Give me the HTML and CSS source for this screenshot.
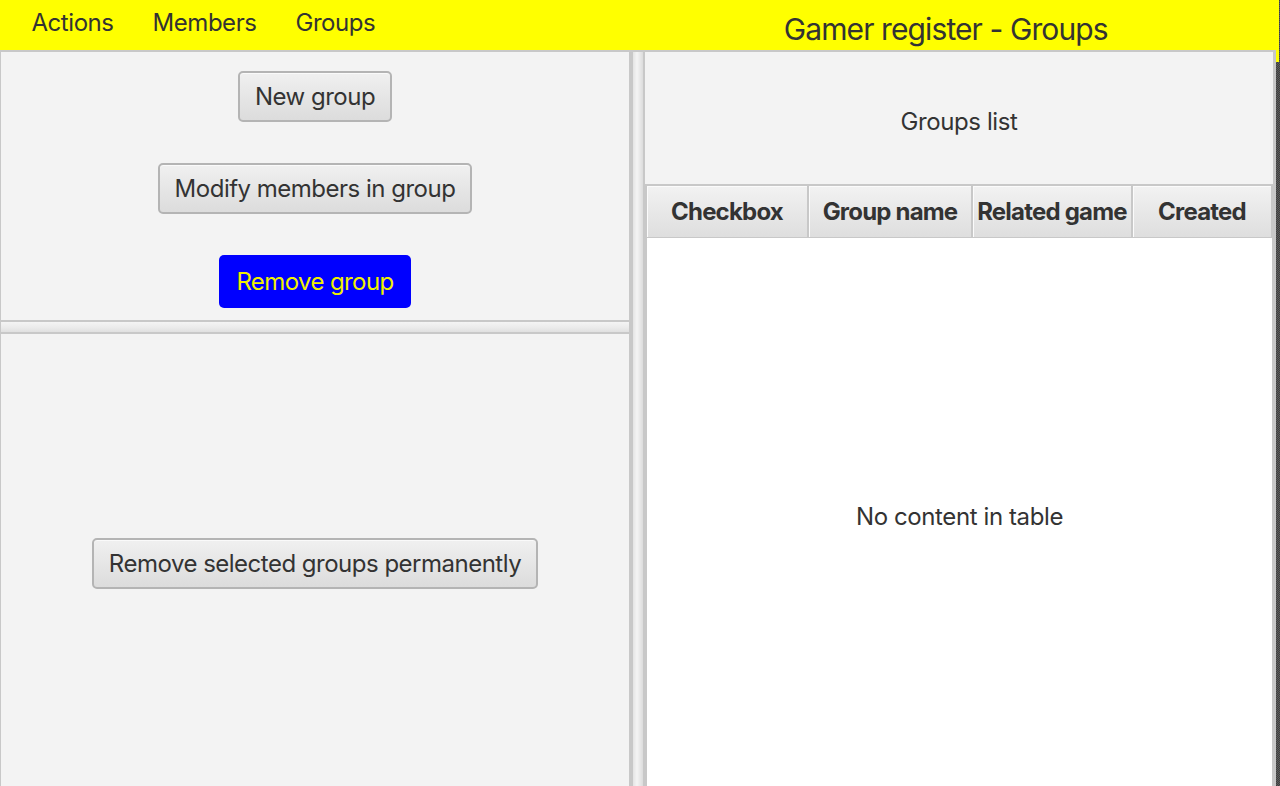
FILE: index.html
```html
<!DOCTYPE html>
<html lang="en">
<head>
<meta charset="utf-8">
<title>Gamer register - Groups</title>
<link rel="stylesheet" href="styles.css">
</head>
<body>
<div class="app">
  <header class="menubar">
    <nav class="menu">
      <span class="menu-item">Actions</span>
      <span class="menu-item">Members</span>
      <span class="menu-item">Groups</span>
    </nav>
    <h1 class="title">Gamer register - Groups</h1>
  </header>
  <div class="main">
    <section class="left-pane">
      <div class="actions">
        <button class="btn">New group</button>
        <button class="btn">Modify members in group</button>
        <button class="btn btn-blue">Remove group</button>
      </div>
      <div class="hdivider"></div>
      <div class="danger">
        <button class="btn">Remove selected groups permanently</button>
      </div>
    </section>
    <div class="vdivider"></div>
    <section class="right-pane">
      <div class="list-title">Groups list</div>
      <div class="table">
        <div class="thead">
          <div class="th col-1">Checkbox</div>
          <div class="th col-2">Group name</div>
          <div class="th col-3">Related game</div>
          <div class="th col-4">Created</div>
          <div class="th-filler"></div>
        </div>
        <div class="tbody">No content in table</div>
      </div>
    </section>
  </div>
</div>
</body>
</html>
```

FILE: styles.css
```css
* { box-sizing: border-box; }

html, body {
  margin: 0;
  padding: 0;
}

body {
  width: 1280px;
  height: 786px;
  overflow: hidden;
  font-family: Inter, "Noto Sans", sans-serif;
  color: #333333;
  background-color: #4a4a4a;
  background-image: repeating-conic-gradient(#3e3e3e 0 25%, #5c5c5c 0 50%);
  background-size: 2px 2px;
}

.app {
  position: relative;
  width: 1280px;
  height: 786px;
}

.menubar {
  position: relative;
  height: 50px;
  width: 1279px;
  background: #ffff00;
  display: flex;
  align-items: flex-start;
}

.menubar::after {
  content: "";
  position: absolute;
  right: 0;
  top: 50px;
  width: 3px;
  height: 12px;
  background: #ffff00;
}

.menu {
  display: flex;
  padding-left: 12px;
  height: 45px;
  align-items: center;
}

.menu-item {
  font-size: 24px;
  padding: 0 19.5px;
  line-height: 30px;
  letter-spacing: -0.45px;
}

.title {
  margin: 0 0 0 389px;
  font-size: 30px;
  font-weight: 400;
  line-height: 36px;
  padding-top: 11px;
  letter-spacing: -0.9px;
}

.main {
  display: flex;
  width: 1276px;
  height: 736px;
  border-top: 2px solid #c8c8c8;
  background: #f3f3f3;
}

.left-pane {
  width: 629px;
  border-left: 1px solid #c8c8c8;
  display: flex;
  flex-direction: column;
}

.actions {
  height: 268px;
  flex-shrink: 0;
  display: flex;
  flex-direction: column;
  align-items: center;
  padding-top: 19px;
  gap: 41px;
}

.btn {
  font-family: inherit;
  font-size: 24px;
  letter-spacing: -0.5px;
  color: #333333;
  height: 51px;
  padding: 0 15px;
  border: 2px solid #b4b4b4;
  border-radius: 5px;
  background: linear-gradient(#f0f0f0, #dcdcdc);
  box-shadow: inset 0 1px 0 #fafafa;
  line-height: 1;
}

.btn-blue {
  height: 53px;
  padding: 0 17px;
  border: none;
  background: #0000ff;
  box-shadow: none;
  color: #f0f000;
  letter-spacing: -0.6px;
}

.hdivider {
  height: 14px;
  flex-shrink: 0;
  border-top: 2px solid #c8c8c8;
  border-bottom: 2px solid #c8c8c8;
  background: linear-gradient(#f4f4f4, #ececec 50%, #e0e0e0);
}

.danger {
  flex: 1;
  display: flex;
  align-items: center;
  justify-content: center;
  padding-top: 7px;
}

.vdivider {
  width: 16px;
  border-left: 4px solid #c8c8c8;
  border-right: 2px solid #c8c8c8;
  background: linear-gradient(to right, #e4e4e4, #f4f4f4 40%, #dcdcdc);
}

.right-pane {
  flex: 1;
  border-right: 3px solid #c8c8c8;
  display: flex;
  flex-direction: column;
  min-width: 0;
  overflow: hidden;
}

.list-title {
  height: 132px;
  flex-shrink: 0;
  display: flex;
  align-items: center;
  justify-content: center;
  font-size: 24px;
  letter-spacing: -0.4px;
  padding-top: 6px;
}

.table {
  flex-shrink: 0;
  border: 2px solid #c8c8c8;
  border-right-width: 1px;
  background: #ffffff;
}

.thead {
  display: flex;
  height: 52px;
  border-bottom: 1px solid #c8c8c8;
}

.th {
  display: flex;
  align-items: center;
  justify-content: center;
  font-size: 24px;
  font-weight: 700;
  letter-spacing: -0.8px;
  background: linear-gradient(#f2f2f2, #dedede);
  border-right: 2px solid #c8c8c8;
  box-shadow: inset 1px 1px 0 #fbfbfb;
  white-space: nowrap;
}

.col-1 { width: 162px; }
.col-2 { width: 164px; }
.col-3 { width: 160px; }
.col-4 { width: 138px; border-right: none; }

.th-filler {
  flex: 1;
  background: linear-gradient(#f2f2f2, #dedede);
  border-left: 1px solid #c8c8c8;
}

.tbody {
  height: 556px;
  display: flex;
  align-items: center;
  justify-content: center;
  font-size: 24px;
  letter-spacing: -0.4px;
}
```
